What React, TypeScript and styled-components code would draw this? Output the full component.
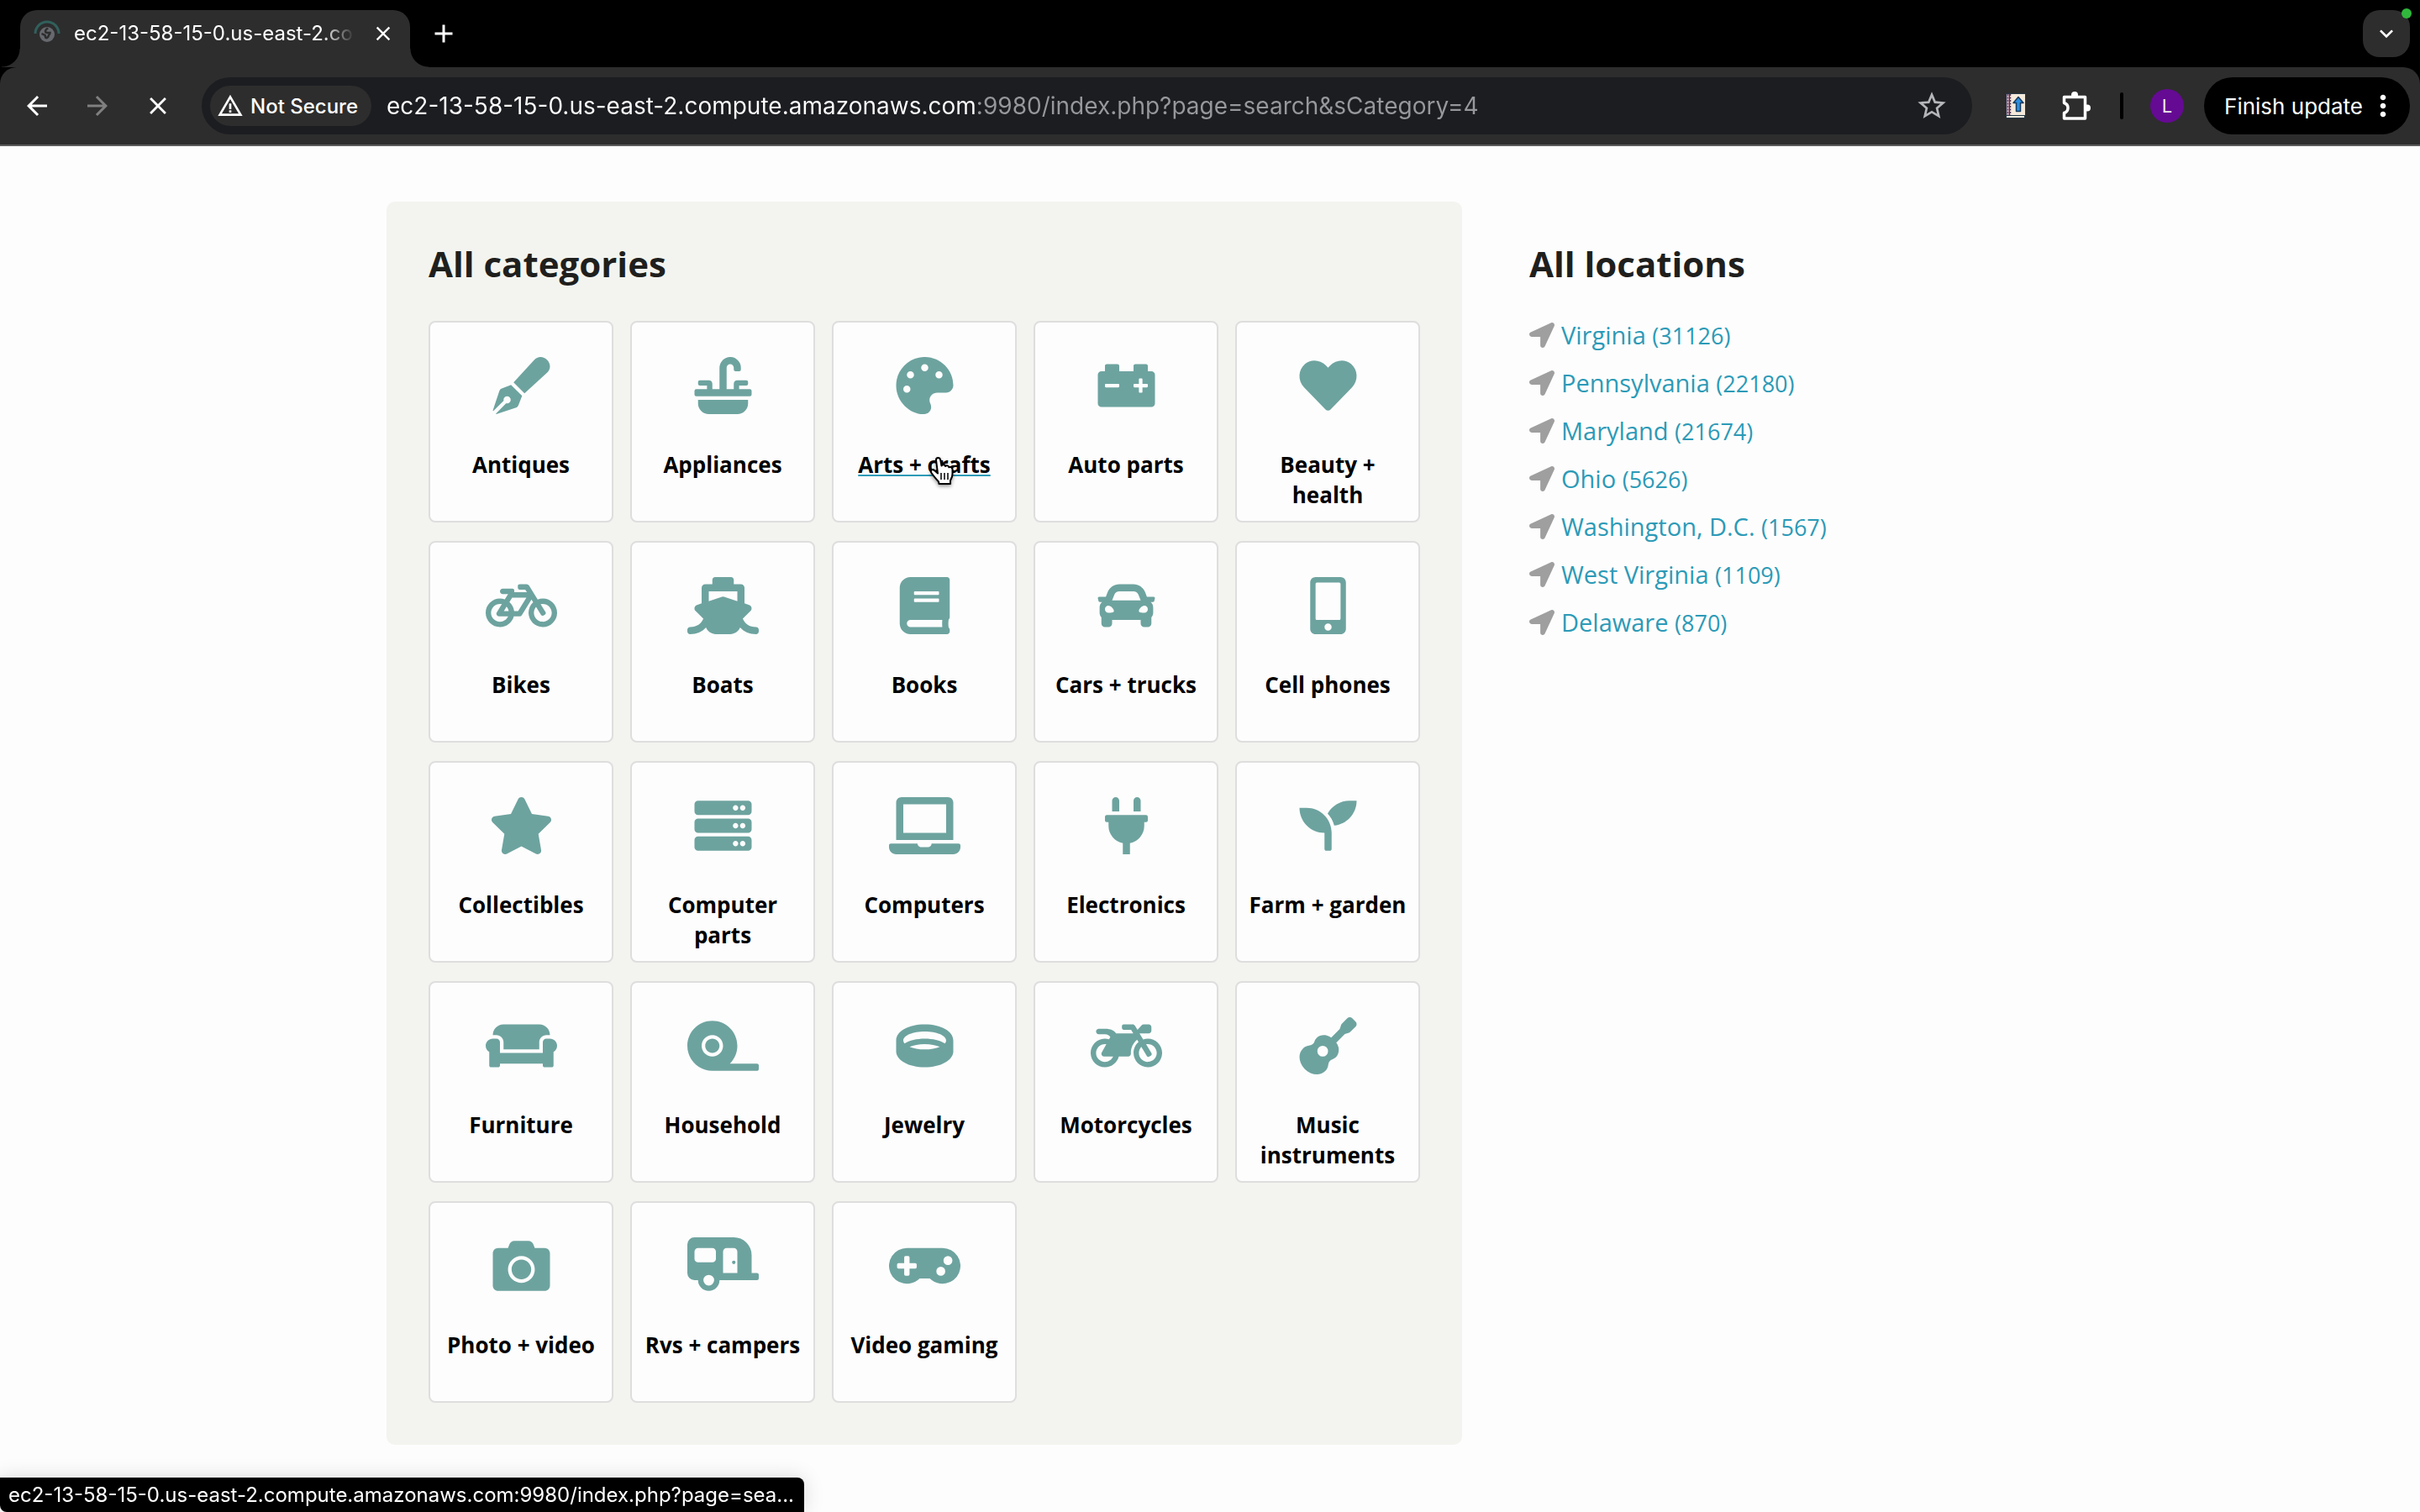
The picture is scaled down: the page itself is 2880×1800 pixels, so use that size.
import React from 'react';
import styled, { createGlobalStyle, css } from 'styled-components';
import type { IconType } from 'react-icons';
import {
  FaBicycle, FaBook, FaCamera, FaCar, FaCaravan, FaCarBattery, FaCouch, FaGamepad, FaGuitar,
  FaHeart, FaLaptop, FaLocationArrow, FaMobileAlt, FaMotorcycle, FaPalette, FaPenFancy, FaPlug,
  FaRing, FaSeedling, FaServer, FaShip, FaSink, FaStar, FaTape,
} from 'react-icons/fa';
import {
  MdAdd, MdArrowBack, MdArrowForward, MdClose, MdKeyboardArrowDown, MdMoreVert, MdStarBorder,
  MdWarningAmber,
} from 'react-icons/md';

const uiFont = '"Inter", "Liberation Sans", sans-serif';
const pageFont = '"Open Sans", "Noto Sans", sans-serif';
const chrome = '#2d2d2d';
const teal = '#6da39f';
const link = '#2c9ab7';

const GlobalStyle = createGlobalStyle`
  *, *::before, *::after { box-sizing: border-box; }
  body { margin: 0; background: #fdfdfd; }
  button, input { font: inherit; color: inherit; }
`;

const Page = styled.div`
  min-height: 100vh;
  display: flex;
  flex-direction: column;
  font-family: ${pageFont};
`;

/* Browser frame */
const Browser = styled.header`
  background: #000;
  color: #fff;
  font-family: ${uiFont};
`;

const TabStrip = styled.div`
  display: flex;
  align-items: flex-start;
  height: 80px;
  padding: 12px 12px 0 24px;
`;

const Tab = styled.div`
  position: relative;
  display: flex;
  align-items: center;
  width: 464px;
  height: 68px;
  padding: 0 18px 12px 16px;
  border-radius: 20px 20px 0 0;
  background: ${chrome};

  &::before,
  &::after {
    content: '';
    position: absolute;
    bottom: 0;
    width: 22px;
    height: 22px;
  }
  &::before {
    right: 100%;
    background: radial-gradient(circle at 0 0, transparent 21px, ${chrome} 22px);
  }
  &::after {
    left: 100%;
    background: radial-gradient(circle at 100% 0, transparent 21px, ${chrome} 22px);
  }
`;

const Favicon = styled.svg`
  flex: none;
  width: 32px;
  height: 32px;
`;

const TabTitle = styled.span`
  flex: 1;
  margin: 0 20px 0 16px;
  overflow: hidden;
  white-space: nowrap;
  font-size: 24px;
  line-height: 32px;
  mask-image: linear-gradient(90deg, #000 calc(100% - 40px), transparent);
`;

const IconButton = styled.button<{ $size: number; $glyph: number; $muted?: boolean }>`
  display: flex;
  flex: none;
  align-items: center;
  justify-content: center;
  width: ${(p) => p.$size}px;
  height: ${(p) => p.$size}px;
  padding: 0;
  border: 0;
  background: none;
  color: ${(p) => (p.$muted ? '#808080' : '#fff')};

  svg {
    width: ${(p) => p.$glyph}px;
    height: ${(p) => p.$glyph}px;
  }
`;

const NewTab = styled(IconButton)`
  margin: 0 auto 0 12px;
`;

const TabSearch = styled(IconButton)`
  position: relative;
  border-radius: 20px;
  background: ${chrome};
`;

const CameraLight = styled.i`
  position: absolute;
  top: -2px;
  right: -2px;
  width: 12px;
  height: 12px;
  border-radius: 50%;
  background: #30b83c;
`;

const Toolbar = styled.div`
  display: flex;
  align-items: center;
  height: 94px;
  padding: 0 12px 0 8px;
  border-bottom: 2px solid #5b5b5b;
  border-radius: 20px 20px 0 0;
  background: ${chrome};
`;

const NavButtons = styled.nav`
  display: flex;
  margin-right: 16px;
`;

const Omnibox = styled.form`
  display: flex;
  flex: 1;
  align-items: center;
  height: 68px;
  padding: 0 20px 0 10px;
  border-radius: 34px;
  background: #1c1d21;
`;

const SecurityChip = styled.button`
  display: flex;
  flex: none;
  align-items: center;
  gap: 8px;
  height: 48px;
  padding: 0 16px 0 8px;
  border: 0;
  border-radius: 24px;
  background: ${chrome};
  font-size: 24px;
  font-weight: 500;

  svg {
    width: 32px;
    height: 32px;
  }
`;

const Address = styled.input`
  flex: 1;
  min-width: 0;
  margin: 0 18px;
  padding: 0;
  border: 0;
  outline: 0;
  font-size: 28px;
  line-height: 40px;
  background: linear-gradient(90deg, #fff 703px, #96989c 703px);
  background-clip: text;
  color: transparent;
`;

const BookmarkButton = styled(IconButton)`
  color: #b4b6ba;
`;

const Extensions = styled.div`
  display: flex;
  align-items: center;
  margin: 0 24px 0 16px;
`;

const Divider = styled.span`
  width: 4px;
  height: 32px;
  margin: 0 32px 0 16px;
  border-radius: 2px;
  background: #000;
`;

const Avatar = styled.button`
  width: 40px;
  height: 40px;
  padding: 0;
  border: 0;
  border-radius: 50%;
  background: #650a93;
  color: #eee;
  font-size: 22px;
`;

const UpdateButton = styled.button`
  display: flex;
  align-items: center;
  gap: 4px;
  height: 68px;
  padding: 0 12px 0 24px;
  border: 0;
  border-radius: 34px;
  background: #000;
  font-size: 26px;
  white-space: nowrap;

  svg {
    width: 40px;
    height: 40px;
  }
`;

/* Page content */
const Content = styled.main`
  display: grid;
  grid-template-columns: minmax(0, 1280fr) minmax(0, 600fr);
  gap: 80px;
  width: 100%;
  max-width: 1960px;
  margin: 0 auto;
  padding: 66px 0;
`;

const Panel = styled.section`
  padding: 50px;
  border-radius: 10px;
  background: #f3f4ef;
`;

const Sidebar = styled.aside`
  padding: 50px 0;
`;

const Heading = styled.h2<{ $gap: number }>`
  margin: 0 0 ${(p) => p.$gap}px;
  color: #1f1f1d;
  font-size: 42px;
  font-weight: 700;
  line-height: 48px;
`;

const CategoryGrid = styled.ul`
  display: grid;
  grid-template-columns: repeat(5, minmax(0, 1fr));
  gap: 22px 20px;
  margin: 0;
  padding: 0;
  list-style: none;
`;

const CategoryItem = styled.li`
  position: relative;
`;

const CategoryCard = styled.a<{ $hovered?: boolean }>`
  display: flex;
  flex-direction: column;
  align-items: center;
  gap: 42px;
  min-height: 240px;
  padding: 41px 8px 0;
  border: 2px solid #dedede;
  border-radius: 8px;
  background: #fdfdfd;
  color: #000;
  font-size: 26px;
  font-weight: 700;
  line-height: 36px;
  text-align: center;
  text-decoration: none;

  > svg {
    width: 85px;
    height: 68px;
    color: ${teal};
  }

  ${(p) =>
    p.$hovered &&
    css`
      text-decoration: underline 2px ${link};
      text-underline-offset: 2px;
    `}
`;

const Pointer = styled.svg`
  position: absolute;
  top: 161px;
  left: 114px;
  width: 34px;
  height: 38px;
  filter: drop-shadow(0 2px 2px rgba(0, 0, 0, 0.4));
`;

const LocationList = styled.ul`
  margin: 0;
  padding: 0;
  list-style: none;
`;

const LocationLink = styled.a`
  display: flex;
  align-items: center;
  gap: 8px;
  color: ${link};
  font-size: 29px;
  line-height: 57px;
  text-decoration: none;

  svg {
    width: 30px;
    height: 30px;
    color: #9f9f9f;
  }
`;

const Count = styled.span`
  font-size: 27px;
  line-height: 1;
`;

const StatusBar = styled.div`
  position: fixed;
  bottom: 0;
  left: 0;
  padding: 5px 12px 4px 10px;
  border-radius: 0 8px 0 8px;
  background: #000;
  box-shadow: 0 0 24px rgba(0, 0, 0, 0.14);
  color: #fff;
  font-family: ${uiFont};
  font-size: 24px;
  line-height: 32px;
`;

const categories: { name: string; Icon: IconType; hovered?: boolean }[] = [
  { name: 'Antiques', Icon: FaPenFancy },
  { name: 'Appliances', Icon: FaSink },
  { name: 'Arts + crafts', Icon: FaPalette, hovered: true },
  { name: 'Auto parts', Icon: FaCarBattery },
  { name: 'Beauty + health', Icon: FaHeart },
  { name: 'Bikes', Icon: FaBicycle },
  { name: 'Boats', Icon: FaShip },
  { name: 'Books', Icon: FaBook },
  { name: 'Cars + trucks', Icon: FaCar },
  { name: 'Cell phones', Icon: FaMobileAlt },
  { name: 'Collectibles', Icon: FaStar },
  { name: 'Computer parts', Icon: FaServer },
  { name: 'Computers', Icon: FaLaptop },
  { name: 'Electronics', Icon: FaPlug },
  { name: 'Farm + garden', Icon: FaSeedling },
  { name: 'Furniture', Icon: FaCouch },
  { name: 'Household', Icon: FaTape },
  { name: 'Jewelry', Icon: FaRing },
  { name: 'Motorcycles', Icon: FaMotorcycle },
  { name: 'Music instruments', Icon: FaGuitar },
  { name: 'Photo + video', Icon: FaCamera },
  { name: 'Rvs + campers', Icon: FaCaravan },
  { name: 'Video gaming', Icon: FaGamepad },
];

const locations: [string, number][] = [
  ['Virginia', 31126],
  ['Pennsylvania', 22180],
  ['Maryland', 21674],
  ['Ohio', 5626],
  ['Washington, D.C.', 1567],
  ['West Virginia', 1109],
  ['Delaware', 870],
];

const LoadingGlobe = () => (
  <Favicon viewBox="0 0 32 32" aria-hidden="true">
    <path d="M2 16A14 14 0 0 1 30 16" fill="none" stroke="#31605c" strokeWidth="3" />
    <circle cx="16" cy="17" r="9" fill="#66696d" />
    <path d="M17 9.500c-1 1-3 1.500-3 3.500 0 1.500 1 2 2.500 2h3c0 2-2 2.500-2 4.500-1 1.500-2 2-3 1.500l-1-3-4-2" fill="none" stroke="#2d2d2d" strokeWidth="2.500" />
  </Favicon>
);

const NotebookIcon = () => (
  <svg viewBox="0 0 24 30" aria-hidden="true">
    <rect width="24" height="30" rx="1" fill="#233746" />
    <rect x="5" y="1" width="18" height="25" fill="#f5eadb" />
    <rect x="1" y="27" width="21" height="2" fill="#f5eadb" />
    <rect x="1" y="1" width="3" height="25" fill="#c9a2b4" />
    <path d="M2.500 1v25M5.500 1v25" stroke="#5a3d58" strokeWidth="1.500" strokeDasharray="2 1.500" />
    <path d="M15 4.500 21 11.500H17.500V21.500H12.500V11.500H9Z" fill="#2d8fe0" stroke="#173a5c" strokeWidth="1.500" strokeLinejoin="round" />
  </svg>
);

const PuzzleIcon = () => (
  <svg viewBox="0 0 36 36" aria-hidden="true">
    <path d="M3.500 7.500H28.500V33H3.500V26.500C9.500 24.500 9.500 16.500 3.500 14.500Z" fill="none" stroke="currentColor" strokeWidth="3.500" strokeLinejoin="round" />
    <circle cx="16" cy="5" r="4" fill="currentColor" />
    <circle cx="31" cy="20.500" r="4" fill="currentColor" />
  </svg>
);

const HandPointer = () => (
  <Pointer viewBox="0 0 34 38" aria-hidden="true">
    <path
      d="M10 4.500C10 1 14.500 1 15.200 4.500L16.500 11.500C17.500 9.500 20.500 9.800 21 12 22.500 10.500 25 11.300 25.300 13.300 27 12.500 29.500 13.500 29.500 16V21C29.500 25 28 27 27 29V33H13.500L13 30.500C10.500 27.500 7 24 4.500 20 2.500 16.500 6 15 8.300 17.300L12 20.500Z"
      fill="#fff"
      stroke="#000"
      strokeWidth="2"
      strokeLinejoin="round"
    />
    <path d="M16 20V28M20 20V28M24 20V28" stroke="#000" strokeWidth="1.500" />
  </Pointer>
);

export default function App() {
  return (
    <Page>
      <GlobalStyle />
      <Browser>
        <TabStrip>
          <Tab>
            <LoadingGlobe />
            <TabTitle>ec2-13-58-15-0.us-east-2.compute.amazonaws.com</TabTitle>
            <IconButton $size={28} $glyph={28} aria-label="Close tab"><MdClose /></IconButton>
          </Tab>
          <NewTab $size={56} $glyph={36} aria-label="New tab"><MdAdd /></NewTab>
          <TabSearch $size={56} $glyph={32} aria-label="Search tabs">
            <MdKeyboardArrowDown />
            <CameraLight />
          </TabSearch>
        </TabStrip>
        <Toolbar>
          <NavButtons aria-label="History">
            <IconButton $size={72} $glyph={36} aria-label="Back"><MdArrowBack /></IconButton>
            <IconButton $size={72} $glyph={36} $muted aria-label="Forward"><MdArrowForward /></IconButton>
            <IconButton $size={72} $glyph={34} aria-label="Stop loading"><MdClose /></IconButton>
          </NavButtons>
          <Omnibox onSubmit={(e) => e.preventDefault()}>
            <SecurityChip type="button"><MdWarningAmber />Not Secure</SecurityChip>
            <Address
              aria-label="Address"
              defaultValue="ec2-13-58-15-0.us-east-2.compute.amazonaws.com:9980/index.php?page=search&sCategory=4"
            />
            <BookmarkButton type="button" $size={56} $glyph={40} aria-label="Bookmark this page"><MdStarBorder /></BookmarkButton>
          </Omnibox>
          <Extensions>
            <IconButton $size={72} $glyph={30} aria-label="Notebook extension"><NotebookIcon /></IconButton>
            <IconButton $size={72} $glyph={36} aria-label="Extensions"><PuzzleIcon /></IconButton>
            <Divider />
            <Avatar aria-label="Profile">L</Avatar>
          </Extensions>
          <UpdateButton>Finish update<MdMoreVert /></UpdateButton>
        </Toolbar>
      </Browser>

      <Content>
        <Panel>
          <Heading $gap={44}>All categories</Heading>
          <CategoryGrid>
            {categories.map(({ name, Icon, hovered }) => (
              <CategoryItem key={name}>
                <CategoryCard href="#" $hovered={hovered}>
                  <Icon aria-hidden="true" />
                  <span>{name}</span>
                </CategoryCard>
                {hovered && <HandPointer />}
              </CategoryItem>
            ))}
          </CategoryGrid>
        </Panel>
        <Sidebar>
          <Heading $gap={32}>All locations</Heading>
          <LocationList>
            {locations.map(([name, count]) => (
              <li key={name}>
                <LocationLink href="#">
                  <FaLocationArrow aria-hidden="true" />
                  <span>{name} <Count>({count})</Count></span>
                </LocationLink>
              </li>
            ))}
          </LocationList>
        </Sidebar>
      </Content>

      <StatusBar>ec2-13-58-15-0.us-east-2.compute.amazonaws.com:9980/index.php?page=sea...</StatusBar>
    </Page>
  );
}
